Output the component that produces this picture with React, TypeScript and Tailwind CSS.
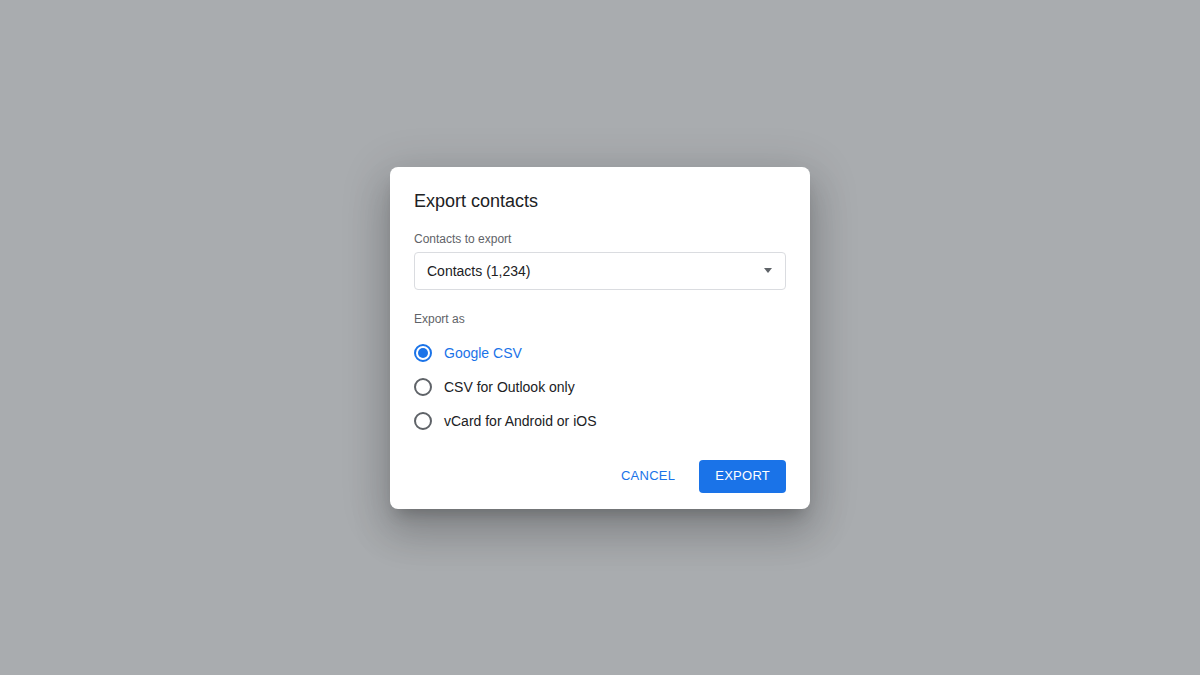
import { useState } from "react";

const OPTIONS = ["Google CSV", "CSV for Outlook only", "vCard for Android or iOS"];

export default function App() {
  const [selected, setSelected] = useState(0);

  return (
    <div
      className="flex h-[675px] w-full items-center justify-center bg-[#a9acaf]"
      style={{ fontFamily: '"Liberation Sans", Arial, sans-serif' }}
    >
      <div className="flex w-[420px] flex-col rounded-[8px] bg-white px-6 pt-[22px] pb-[16px] shadow-[0_11px_15px_-7px_rgba(0,0,0,0.2),0_24px_38px_3px_rgba(0,0,0,0.14),0_9px_46px_8px_rgba(0,0,0,0.12)]">
        <h2 className="h-6 text-[18px] leading-6 text-[#202124]">Export contacts</h2>

        <div className="mt-[18px] h-4 text-[12px] leading-4 text-[#5f6368]">Contacts to export</div>
        <div className="mt-[5px] flex h-[38px] items-center justify-between rounded-[4px] border border-[#dadce0] px-[12px]">
          <span className="text-[14px] leading-5 text-[#202124]">Contacts (1,234)</span>
          <span className="mr-[1px] h-0 w-0 border-x-[4px] border-t-[5px] border-x-transparent border-t-[#5f6368]" />
        </div>

        <div className="mt-[21px] h-4 text-[12px] leading-4 text-[#5f6368]">Export as</div>
        <div className="mt-[9px] flex flex-col">
          {OPTIONS.map((label, i) => {
            const on = i === selected;
            return (
              <button
                key={label}
                onClick={() => setSelected(i)}
                className="flex h-[34px] items-center gap-3 text-left"
              >
                <span
                  className={
                    on
                      ? "flex h-[18px] w-[18px] items-center justify-center rounded-full border-2 border-[#1a73e8]"
                      : "flex h-[18px] w-[18px] items-center justify-center rounded-full border-2 border-[#5f6368]"
                  }
                >
                  {on ? <span className="h-[10px] w-[10px] rounded-full bg-[#1a73e8]" /> : null}
                </span>
                <span className={on ? "text-[14px] leading-5 text-[#1a73e8]" : "text-[14px] leading-5 text-[#202124]"}>
                  {label}
                </span>
              </button>
            );
          })}
        </div>

        <div className="mt-[22px] flex justify-end gap-2">
          <button className="h-[33px] rounded-[4px] px-4 text-[13px] tracking-[0.02em] text-[#1a73e8]">CANCEL</button>
          <button className="h-[33px] rounded-[4px] bg-[#1a73e8] px-4 text-[13px] tracking-[0.02em] text-white">
            EXPORT
          </button>
        </div>
      </div>
    </div>
  );
}
